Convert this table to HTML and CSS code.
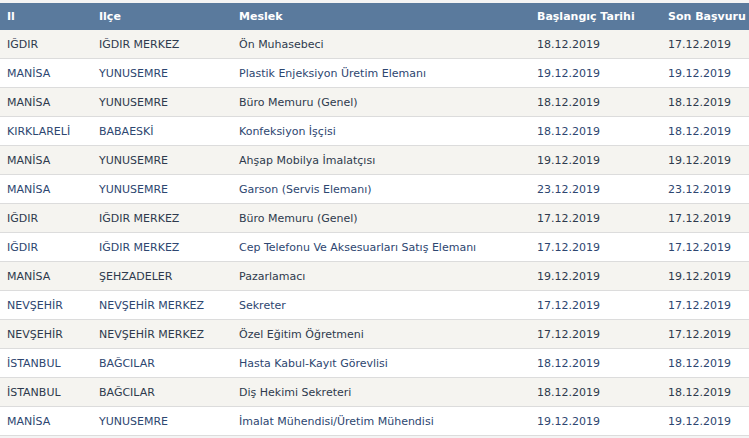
FILE: index.html
```html
<!DOCTYPE html>
<html lang="tr">
<head>
<meta charset="utf-8">
<link rel="stylesheet" href="styles.css">
</head>
<body>
<div class="wrap">
<table class="jobs">
<colgroup>
<col class="c-il"><col class="c-ilce"><col class="c-meslek"><col class="c-bas"><col class="c-son">
</colgroup>
<thead>
<tr><th>Il</th><th>Ilçe</th><th>Meslek</th><th>Başlangıç Tarihi</th><th>Son Başvuru</th></tr>
</thead>
<tbody>
<tr><td>IĞDIR</td><td>IĞDIR MERKEZ</td><td>Ön Muhasebeci</td><td>18.12.2019</td><td>17.12.2019</td></tr>
<tr><td>MANİSA</td><td>YUNUSEMRE</td><td>Plastik Enjeksiyon Üretim Elemanı</td><td>19.12.2019</td><td>19.12.2019</td></tr>
<tr><td>MANİSA</td><td>YUNUSEMRE</td><td>Büro Memuru (Genel)</td><td>18.12.2019</td><td>18.12.2019</td></tr>
<tr><td>KIRKLARELİ</td><td>BABAESKİ</td><td>Konfeksiyon İşçisi</td><td>18.12.2019</td><td>18.12.2019</td></tr>
<tr><td>MANİSA</td><td>YUNUSEMRE</td><td>Ahşap Mobilya İmalatçısı</td><td>19.12.2019</td><td>19.12.2019</td></tr>
<tr><td>MANİSA</td><td>YUNUSEMRE</td><td>Garson (Servis Elemanı)</td><td>23.12.2019</td><td>23.12.2019</td></tr>
<tr><td>IĞDIR</td><td>IĞDIR MERKEZ</td><td>Büro Memuru (Genel)</td><td>17.12.2019</td><td>17.12.2019</td></tr>
<tr><td>IĞDIR</td><td>IĞDIR MERKEZ</td><td>Cep Telefonu Ve Aksesuarları Satış Elemanı</td><td>17.12.2019</td><td>17.12.2019</td></tr>
<tr><td>MANİSA</td><td>ŞEHZADELER</td><td>Pazarlamacı</td><td>19.12.2019</td><td>19.12.2019</td></tr>
<tr><td>NEVŞEHİR</td><td>NEVŞEHİR MERKEZ</td><td>Sekreter</td><td>17.12.2019</td><td>17.12.2019</td></tr>
<tr><td>NEVŞEHİR</td><td>NEVŞEHİR MERKEZ</td><td>Özel Eğitim Öğretmeni</td><td>17.12.2019</td><td>17.12.2019</td></tr>
<tr><td>İSTANBUL</td><td>BAĞCILAR</td><td>Hasta Kabul-Kayıt Görevlisi</td><td>18.12.2019</td><td>18.12.2019</td></tr>
<tr><td>İSTANBUL</td><td>BAĞCILAR</td><td>Diş Hekimi Sekreteri</td><td>18.12.2019</td><td>18.12.2019</td></tr>
<tr><td>MANİSA</td><td>YUNUSEMRE</td><td>İmalat Mühendisi/Üretim Mühendisi</td><td>19.12.2019</td><td>19.12.2019</td></tr>
</tbody>
</table>
</div>
</body>
</html>
```
FILE: styles.css
```css
html, body {
  margin: 0;
  padding: 0;
  background: #ffffff;
}
.wrap {
  padding-top: 3px;
  background: #f4f4f4;
  overflow: hidden;
  height: 435px;
}
.jobs {
  width: 749px;
  border-collapse: collapse;
  table-layout: fixed;
  font-family: "DejaVu Sans", Verdana, sans-serif;
  font-size: 11px;
}
.c-il { width: 92px; }
.c-ilce { width: 140px; }
.c-meslek { width: 298px; }
.c-bas { width: 131px; }
.c-son { width: 88px; }
.jobs th {
  background: #5a7a9d;
  color: #ffffff;
  font-weight: bold;
  text-align: left;
  height: 27px;
  padding: 0 0 0 7px;
  white-space: nowrap;
  overflow: hidden;
}
.jobs td {
  height: 28px;
  padding: 0 0 0 7px;
  border-bottom: 1px solid #dcdcdc;
  color: #2e3a4d;
  white-space: nowrap;
  overflow: hidden;
}
.jobs tbody tr:nth-child(odd) td {
  background: #f5f4f0;
}
.jobs tbody tr:nth-child(even) td {
  background: #ffffff;
  color: #2d4670;
}
```
